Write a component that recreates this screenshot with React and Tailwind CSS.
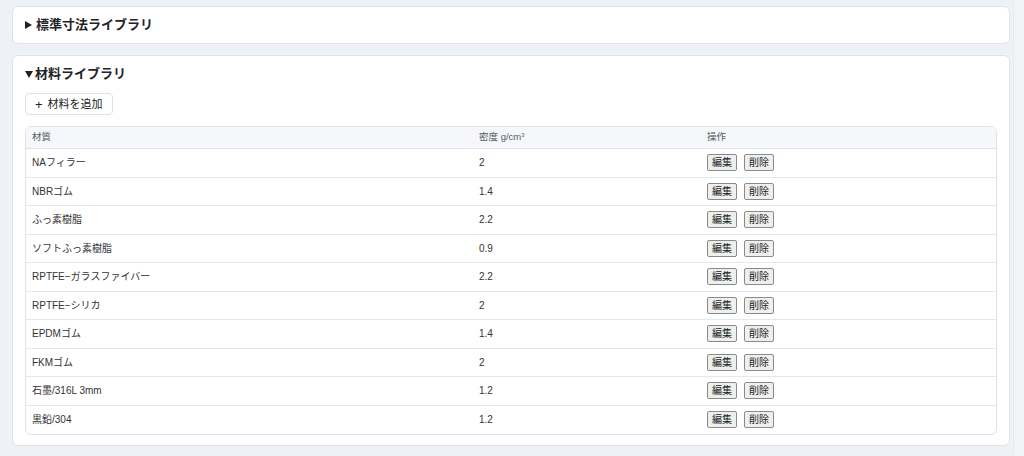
import React from "react";

const rows = [
  ["NAフィラー", "2"],
  ["NBRゴム", "1.4"],
  ["ふっ素樹脂", "2.2"],
  ["ソフトふっ素樹脂", "0.9"],
  ["RPTFE−ガラスファイバー", "2.2"],
  ["RPTFE−シリカ", "2"],
  ["EPDMゴム", "1.4"],
  ["FKMゴム", "2"],
  ["石墨/316L 3mm", "1.2"],
  ["黒鉛/304", "1.2"],
];

const font = { fontFamily: '"Liberation Sans", "Noto Sans CJK JP", sans-serif' };

export default function App() {
  return (
    <div
      className="w-[1024px] h-[456px] overflow-hidden bg-[#eef2f6] flex"
      style={font}
    >
      <div className="flex-1 pl-3 pr-[3px] pt-[6px] flex flex-col gap-[11px]">
        <div className="bg-white border border-[#dde3ea] rounded-md h-[38px] flex items-center px-3 shrink-0">
          <span className="text-[13px] font-bold text-[#1f2328] flex items-center">
            <svg width="7" height="8" viewBox="0 0 7 8" className="mr-[4px]">
              <path d="M0 0L7 4L0 8Z" fill="#1f2328" />
            </svg>
            標準寸法ライブラリ
          </span>
        </div>
        <div className="bg-white border border-[#dde3ea] rounded-md px-3 pt-[9px] pb-[10px] shrink-0">
          <div className="text-[13px] font-bold text-[#1f2328] h-[18px] flex items-center">
            <svg width="8" height="7" viewBox="0 0 8 7" className="mr-[2px]">
              <path d="M0 0L8 0L4 7Z" fill="#1f2328" />
            </svg>
            材料ライブラリ
          </div>
          <button className="mt-[10px] h-[22px] px-[9px] border border-[#d9e0e8] rounded-[4px] bg-white text-[11px] text-[#222] flex items-center gap-[5px]">
            <span className="text-[13px] leading-none">+</span>材料を追加
          </button>
          <div className="mt-[11px] border border-[#dde3ea] rounded-md overflow-hidden">
            <div className="grid grid-cols-[447px_228px_1fr] h-[22px] bg-[#f5f7fa] border-b border-[#dde3ea] items-center text-[9.5px] text-[#555b63]">
              <div className="pl-[6px]">材質</div>
              <div className="pl-[6px]">
                密度 g/cm<sup className="text-[6px]">3</sup>
              </div>
              <div className="pl-[6px]">操作</div>
            </div>
            {rows.map(([name, d], i) => (
              <div
                key={i}
                className={`grid grid-cols-[447px_228px_1fr] h-[28.5px] items-center text-[10px] text-[#333] ${
                  i < rows.length - 1 ? "border-b border-[#e3e8ee]" : ""
                }`}
              >
                <div className="pl-[6px]">{name}</div>
                <div className="pl-[6px]">{d}</div>
                <div className="pl-[6px] flex gap-[7px]">
                  <button className="h-[17px] w-[30px] text-[10px] text-[#222] bg-[#efefef] border border-[#8a8a8a] rounded-[2px] flex items-center justify-center">
                    編集
                  </button>
                  <button className="h-[17px] w-[30px] text-[10px] text-[#222] bg-[#efefef] border border-[#8a8a8a] rounded-[2px] flex items-center justify-center">
                    削除
                  </button>
                </div>
              </div>
            ))}
          </div>
        </div>
        <div className="bg-white border border-[#dde3ea] rounded-md h-[40px] shrink-0" />
      </div>
      <div className="w-[11px] bg-[#f1f4f7] border-l border-[#e6eaef] shrink-0" />
    </div>
  );
}
